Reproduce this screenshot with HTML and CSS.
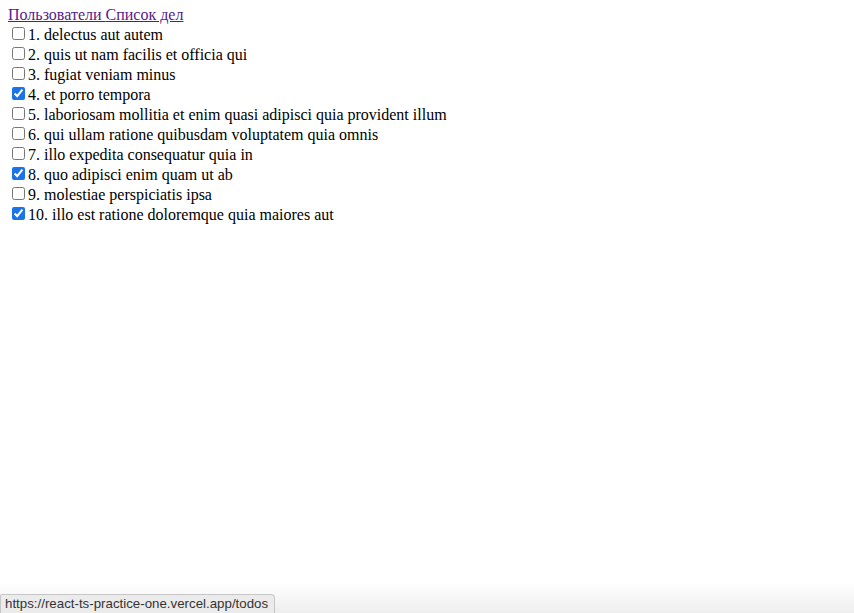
FILE: index.html
```html
<!DOCTYPE html>
<html lang="ru">
<head>
<meta charset="utf-8">
<title>Список дел</title>
<link rel="stylesheet" href="styles.css">
</head>
<body>
<div class="app">
  <nav class="nav"><a class="nav-link" href="#">Пользователи </a><a class="nav-link" href="#">Список дел</a></nav>
  <div class="todos">
    <div class="todo"><input type="checkbox">1. delectus aut autem</div>
    <div class="todo"><input type="checkbox">2. quis ut nam facilis et officia qui</div>
    <div class="todo"><input type="checkbox">3. fugiat veniam minus</div>
    <div class="todo"><input type="checkbox" checked>4. et porro tempora</div>
    <div class="todo"><input type="checkbox">5. laboriosam mollitia et enim quasi adipisci quia provident illum</div>
    <div class="todo"><input type="checkbox">6. qui ullam ratione quibusdam voluptatem quia omnis</div>
    <div class="todo"><input type="checkbox">7. illo expedita consequatur quia in</div>
    <div class="todo"><input type="checkbox" checked>8. quo adipisci enim quam ut ab</div>
    <div class="todo"><input type="checkbox">9. molestiae perspiciatis ipsa</div>
    <div class="todo"><input type="checkbox" checked>10. illo est ratione doloremque quia maiores aut</div>
  </div>
</div>
<div class="status-fade"></div>
<div class="status-bar">https://react-ts-practice-one.vercel.app/todos</div>
</body>
</html>
```
FILE: styles.css
```css
body {
  margin: 6px 8px 8px 8px;
  font-family: "Liberation Serif", "Times New Roman", serif;
  font-size: 16px;
  color: #000;
  background: #fff;
}
.nav-link {
  color: #551a8b;
}
.todo input {
  accent-color: #1a73e8;
}
.status-fade {
  position: fixed;
  left: 0;
  right: 0;
  bottom: 0;
  height: 30px;
  background: linear-gradient(to bottom, rgba(240,240,240,0), rgba(236,236,236,0.9));
  pointer-events: none;
}
.status-bar {
  position: fixed;
  left: 0;
  bottom: 0;
  height: 18px;
  padding: 0 6px 0 4px;
  background: #ebebeb;
  border: 1px solid #c6c6c6;
  border-bottom: none;
  border-radius: 2px 4px 0 0;
  font-family: "Liberation Sans", Arial, sans-serif;
  font-size: 13.3px;
  line-height: 18px;
  color: #333;
}
```
